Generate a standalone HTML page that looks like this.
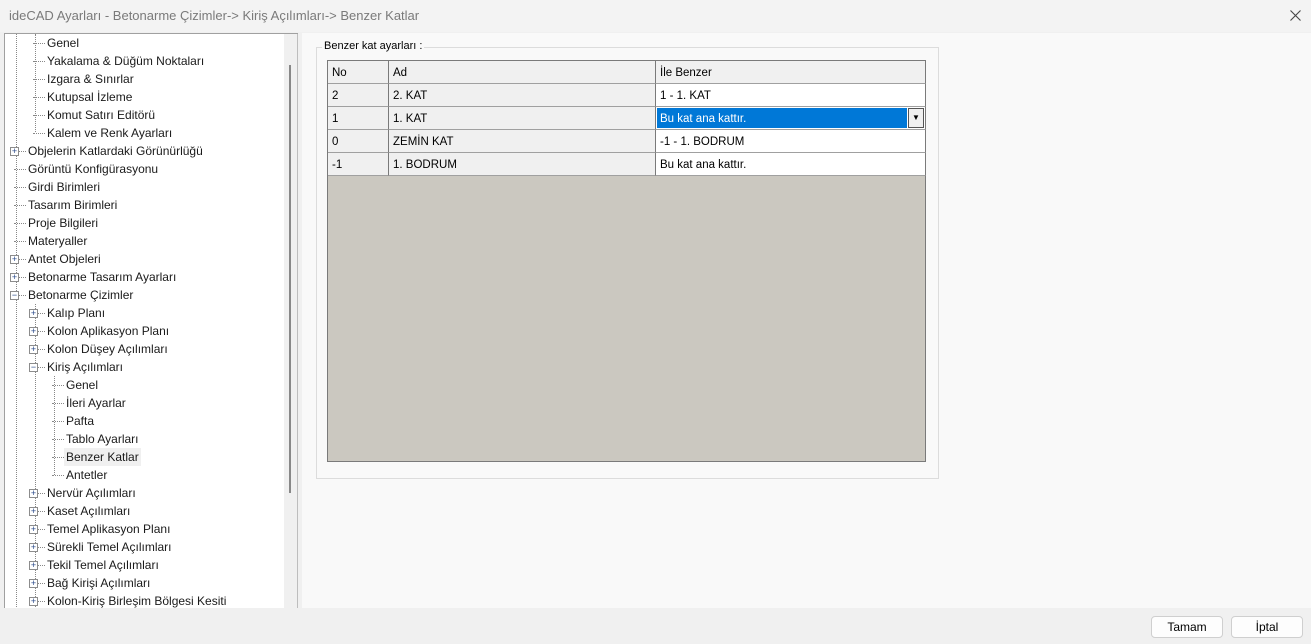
<!DOCTYPE html><html><head><meta charset="utf-8"><style>
*{margin:0;padding:0;box-sizing:border-box}
body{width:1311px;height:644px;background:#f0f0f0;font-family:"Segoe UI","Liberation Sans",sans-serif;font-size:12px;color:#000;position:relative;overflow:hidden}
.title{position:absolute;left:0;top:0;width:1311px;height:32px;background:#f3f3f3;color:#7a7a7a;font-size:13px;padding:8px 0 0 9px}
.close{position:absolute;right:10px;top:10px}
.tree{position:absolute;left:4px;top:33px;width:294px;height:575px;background:#fff;border-top:1px solid #a0a0a0;border-left:1px solid #a0a0a0;overflow:hidden}
.sb{position:absolute;left:279px;top:0;width:15px;height:575px;background:#f0f0f0;border-right:2px solid #bdbdbd}
.thumb{position:absolute;left:5px;top:31px;width:2px;height:428px;background:#888}
.row{position:absolute;height:18px;line-height:18px;white-space:nowrap;color:#1a1a1a}
.box{position:absolute;width:9px;height:9px;border:1px solid #8c8c8c;background:#fff;font-size:9px;line-height:7px;text-align:center;color:#2a4a8a}
.vl{position:absolute;border-left:1px dotted #888}
.hl{position:absolute;border-top:1px dotted #888;height:0}
.right{position:absolute;left:302px;top:33px;width:1009px;height:575px;background:#f9f9f9}
.grp{position:absolute;left:316px;top:47px;width:623px;height:432px;border:1px solid #dcdcdc}
.grpt{position:absolute;left:322px;top:40px;background:#f9f9f9;padding:0 2px;font-size:11px}
.grid{position:absolute;left:327px;top:60px;width:599px;height:402px;background:#cbc8c0;border:1px solid #7a7a7a}
.c{position:absolute;height:23px;line-height:25px;padding-left:4px;border-right:1px solid #7a7a7a;border-bottom:1px solid #a0a0a0;background:#f0f0f0;font-size:11.5px}
.w{background:#fff}
.btn{position:absolute;top:616px;width:72px;height:22px;border:1px solid #cfcfcf;border-radius:4px;background:#fdfdfd;text-align:center;line-height:20px}
</style></head><body>
<div class="title">ideCAD Ayarları - Betonarme Çizimler-&gt; Kiriş Açılımları-&gt; Benzer Katlar<svg class="close" width="11" height="11" viewBox="0 0 11 11"><path d="M0.5 0.5L10.5 10.5M10.5 0.5L0.5 10.5" stroke="#444" stroke-width="1.1"/></svg></div>
<div class="tree">
<div class="sb"><div class="thumb"></div></div>
<div class="vl" style="left:11px;top:0;height:575px"></div>
<div class="vl" style="left:30px;top:0;height:98px"></div>
<div class="vl" style="left:30px;top:270px;height:305px"></div>
<div class="vl" style="left:49px;top:342px;height:99px"></div>
</div>
<div id="t"></div>
<script>
var items=[[2,"Genel",0],[2,"Yakalama & Düğüm Noktaları",0],[2,"Izgara & Sınırlar",0],[2,"Kutupsal İzleme",0],[2,"Komut Satırı Editörü",0],[2,"Kalem ve Renk Ayarları",0],
[1,"Objelerin Katlardaki Görünürlüğü","+"],[1,"Görüntü Konfigürasyonu",0],[1,"Girdi Birimleri",0],[1,"Tasarım Birimleri",0],[1,"Proje Bilgileri",0],[1,"Materyaller",0],[1,"Antet Objeleri","+"],[1,"Betonarme Tasarım Ayarları","+"],[1,"Betonarme Çizimler","−"],
[2,"Kalıp Planı","+"],[2,"Kolon Aplikasyon Planı","+"],[2,"Kolon Düşey Açılımları","+"],[2,"Kiriş Açılımları","−"],
[3,"Genel",0],[3,"İleri Ayarlar",0],[3,"Pafta",0],[3,"Tablo Ayarları",0],[3,"Benzer Katlar",0,1],[3,"Antetler",0],
[2,"Nervür Açılımları","+"],[2,"Kaset Açılımları","+"],[2,"Temel Aplikasyon Planı","+"],[2,"Sürekli Temel Açılımları","+"],[2,"Tekil Temel Açılımları","+"],[2,"Bağ Kirişi Açılımları","+"],[2,"Kolon-Kiriş Birleşim Bölgesi Kesiti","+"]];
var h="";items.forEach(function(it,i){var y=34+i*18;var tx=9+19*it[0];var bx=tx-16;
h+='<div class="hl" style="left:'+(bx+2)+'px;top:'+(y+9)+'px;width:'+(tx-bx-4)+'px"></div>';
if(it[2])h+='<div class="box" style="left:'+(bx-2)+'px;top:'+(y+5)+'px">'+it[2]+'</div>';
h+='<div class="row" style="left:'+(tx-2)+'px;top:'+y+'px;padding:0 2px;'+(it[3]?'background:#f0f0f0':'')+'">'+it[1].replace("&","&amp;")+'</div>';});
document.getElementById("t").innerHTML=h;
</script>
<div class="right"></div>
<div class="grp"></div><div class="grpt">Benzer kat ayarları :</div>
<div class="grid">
<div class="c" style="left:0;top:0;width:61px">No</div><div class="c" style="left:61px;top:0;width:267px">Ad</div><div class="c" style="left:328px;top:0;width:270px">İle Benzer</div>
<div class="c" style="left:0;top:23px;width:61px">2</div><div class="c" style="left:61px;top:23px;width:267px">2. KAT</div><div class="c w" style="left:328px;top:23px;width:270px">1 - 1. KAT</div>
<div class="c" style="left:0;top:46px;width:61px">1</div><div class="c" style="left:61px;top:46px;width:267px">1. KAT</div><div class="c w" style="left:328px;top:46px;width:270px"><div style="position:absolute;left:1px;top:1px;width:250px;height:20px;background:#0078d7;color:#fff;padding-left:3px;line-height:22px">Bu kat ana kattır.</div><div style="position:absolute;left:252px;top:1px;width:16px;height:20px;border:1px solid #555;background:#f0f0f0;font-size:8px;text-align:center;line-height:18px">▼</div></div>
<div class="c" style="left:0;top:69px;width:61px">0</div><div class="c" style="left:61px;top:69px;width:267px">ZEMİN KAT</div><div class="c w" style="left:328px;top:69px;width:270px">-1 - 1. BODRUM</div>
<div class="c" style="left:0;top:92px;width:61px">-1</div><div class="c" style="left:61px;top:92px;width:267px">1. BODRUM</div><div class="c w" style="left:328px;top:92px;width:270px">Bu kat ana kattır.</div>
</div>
<div class="btn" style="left:1151px">Tamam</div><div class="btn" style="left:1231px">İptal</div>
</body></html>
